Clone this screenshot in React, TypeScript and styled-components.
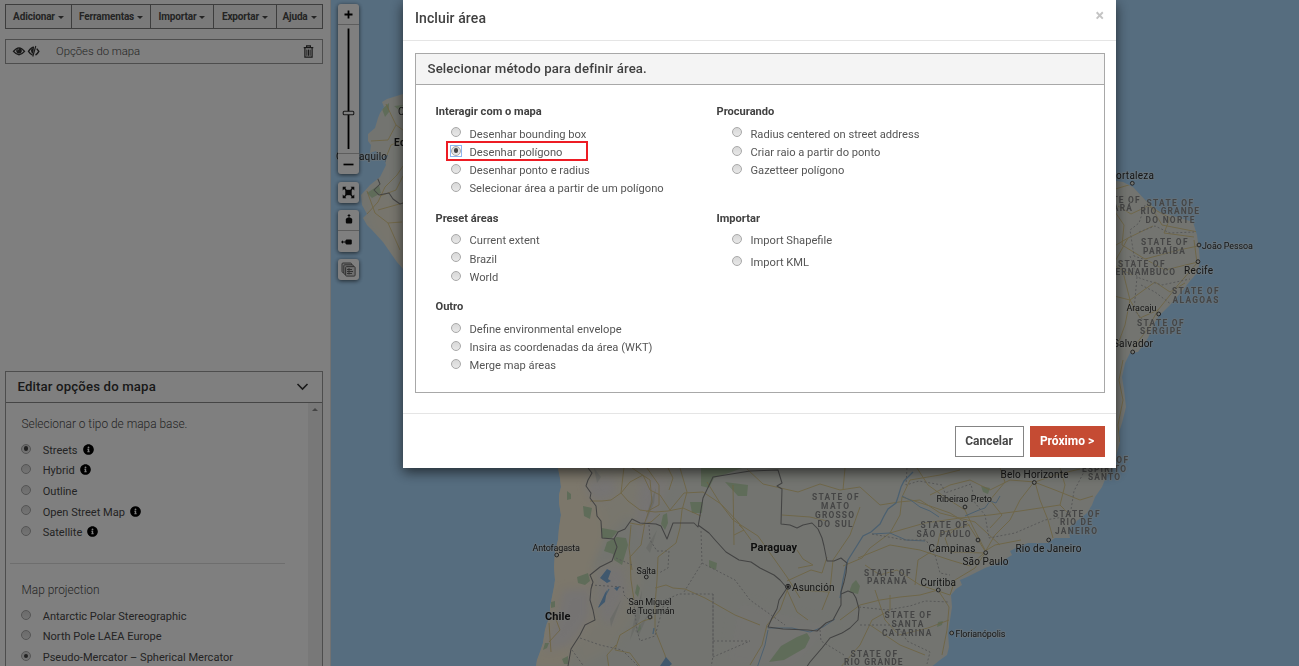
import React from 'react';
import styled, { createGlobalStyle, css } from 'styled-components';
import { FaInfoCircle } from 'react-icons/fa';

const GlobalStyle = createGlobalStyle`
  * { box-sizing: border-box; }
  body { margin: 0; overflow: hidden; background: #fff; font-family: Roboto, "Liberation Sans", sans-serif; color: #484848; }
  button { font-family: inherit; margin: 0; }
`;

const Page = styled.div`
  position: relative;
  display: flex;
  width: 1299px;
  height: 666px;
  overflow: hidden;
  background: #fff;
`;

const Sidebar = styled.aside`
  display: flex;
  flex-direction: column;
  width: 331px;
  flex: none;
  padding: 4px 8px 0 5px;
  border-right: 1px solid #e4e4e4;
  background: #fff;
`;

const Toolbar = styled.div`
  display: flex;
  flex: none;
  height: 25px;
  width: 318px;
  border: 1px solid #7a7a7a;
  background: #f4f4f4;
`;

const ToolButton = styled.button<{ $w: number }>`
  display: flex;
  align-items: center;
  justify-content: center;
  gap: 3px;
  width: ${(p) => p.$w}px;
  padding: 0;
  border: 0;
  border-right: 1px solid #7a7a7a;
  background: transparent;
  color: #484848;
  font-size: 10px;
  font-weight: 700;
  letter-spacing: -0.15px;
  &:last-child { border-right: 0; }
`;

const Caret = styled.span`
  margin-top: 1px;
  border-left: 3px solid transparent;
  border-right: 3px solid transparent;
  border-top: 3px solid #484848;
`;

const LayerRow = styled.div`
  display: flex;
  flex: none;
  align-items: center;
  width: 318px;
  height: 25px;
  margin-top: 10px;
  padding: 0 8px 1px 6px;
  border: 1px solid #9a9a9a;
`;

const LayerName = styled.span`
  flex: 1;
  margin-left: 16px;
  font-size: 11.3px;
  font-weight: 300;
`;

const Options = styled.section`
  display: flex;
  flex: none;
  flex-direction: column;
  width: 318px;
  height: 320px;
  margin-top: 307px;
  border: 1px solid #9a9a9a;
`;

const OptionsHead = styled.header`
  display: flex;
  align-items: center;
  justify-content: space-between;
  height: 31px;
  flex: none;
  padding: 0 13px 1px 11.5px;
  border-bottom: 1px solid #8a8a8a;
  font-size: 13.2px;
  font-weight: 500;
  letter-spacing: 0.15px;
  color: #333;
`;

const OptionsBody = styled.div`
  display: flex;
  flex: 1;
  min-height: 0;
`;

const OptionsScroll = styled.div`
  flex: 1;
  overflow: hidden;
`;

const Scrollbar = styled.div`
  display: flex;
  justify-content: center;
  width: 14px;
  padding-top: 5px;
  background: #f0f0f0;
`;

const ScrollArrow = styled.span`
  width: 0;
  height: 0;
  border-left: 3px solid transparent;
  border-right: 3px solid transparent;
  border-bottom: 3px solid #888;
`;

const SideHeading = styled.h4`
  margin: 0;
  padding: 12px 0 0 15.5px;
  height: 37px;
  font-size: 11.9px;
  line-height: 18px;
  font-weight: 300;
`;

const SideRow = styled.label`
  display: flex;
  align-items: center;
  height: 20.6px;
  padding-left: 15px;
  font-size: 11.05px;
  white-space: nowrap;
  svg { margin-left: 5px; margin-bottom: 2px; color: #000; }
`;

const SideText = styled.span`
  margin-left: 11.7px;
`;

const Separator = styled.hr`
  width: 275px;
  margin: 20px 0 5px 4px;
  border: 0;
  border-top: 1px solid #dcdcdc;
`;

const Radio = styled.span<{ $on?: boolean; $focus?: boolean }>`
  position: relative;
  display: flex;
  align-items: center;
  justify-content: center;
  flex: none;
  width: 10px;
  height: 10px;
  margin-bottom: 3.4px;
  border: 1px solid #a8a8a8;
  border-radius: 50%;
  background: linear-gradient(#d8d8d8, #e8e8e8);
  ${(p) => p.$focus && css`
    &::before {
      content: '';
      position: absolute;
      inset: -2px;
      border: 1px solid #8fb6ee;
    }
  `}
  &::after {
    content: '';
    width: 4.5px;
    height: 4.5px;
    border-radius: 50%;
    background: ${(p) => (p.$on ? '#454545' : 'transparent')};
  }
`;

const MapPane = styled.main`
  position: relative;
  flex: 1;
  background: #acdaff;
`;

const MapDrawing = styled.svg`
  display: block;
  width: 968px;
  height: 666px;
`;

const Controls = styled.div`
  position: absolute;
  left: 7px;
  top: 4px;
  display: flex;
  flex-direction: column;
  gap: 7px;
  width: 21px;
`;

const ControlBox = styled.div`
  display: flex;
  flex-direction: column;
  border-radius: 3px;
  background: #fff;
  box-shadow: 0 1px 4px rgba(0, 0, 0, 0.65);
  &:first-child { margin-bottom: 1px; }
`;

const ControlCell = styled.div<{ $h: number }>`
  display: flex;
  align-items: center;
  justify-content: center;
  height: ${(p) => p.$h}px;
  & + & { border-top: 1px solid #bbb; }
`;

const Backdrop = styled.div`
  position: absolute;
  inset: 0;
  background: rgba(0, 0, 0, 0.5);
`;

const Dialog = styled.div`
  position: absolute;
  left: 403px;
  top: 0;
  display: flex;
  flex-direction: column;
  width: 713px;
  height: 468px;
  background: #fff;
  box-shadow: 0 4px 12px rgba(0, 0, 0, 0.6);
`;

const DialogHead = styled.header`
  display: flex;
  justify-content: space-between;
  height: 41px;
  padding: 9px 12px 0 12px;
  border-bottom: 1px solid #e5e5e5;
`;

const DialogTitle = styled.h3`
  margin: 0;
  font-size: 14px;
  line-height: 18px;
  font-weight: 500;
  letter-spacing: 0.1px;
  color: #404040;
`;

const Close = styled.button`
  height: 14px;
  padding: 0;
  border: 0;
  background: none;
  color: #c4c4c4;
  font-size: 16px;
  line-height: 14px;
  font-weight: 700;
`;

const Panel = styled.section`
  height: 340px;
  margin: 12px 11.5px 0 12px;
  border: 1px solid #a8a8a8;
`;

const PanelHead = styled.header`
  height: 31px;
  padding-left: 11.5px;
  border-bottom: 1px solid #a8a8a8;
  background: #f4f4f4;
  color: #404040;
  font-size: 13.2px;
  font-weight: 500;
  letter-spacing: 0.15px;
  line-height: 30px;
`;

const Choices = styled.div`
  display: grid;
  grid-template-columns: 281px 1fr;
  row-gap: 11px;
  padding: 17px 0 0 19.5px;
`;

const Group = styled.div`
  display: flex;
  flex-direction: column;
`;

const GroupTitle = styled.h4<{ $gap?: number }>`
  height: 20px;
  margin: 0 0 ${(p) => p.$gap ?? 3}px;
  color: #404040;
  font-size: 11.1px;
  font-weight: 700;
  line-height: 20px;
`;

const ChoiceRow = styled.label<{ $h?: number }>`
  position: relative;
  display: flex;
  align-items: center;
  height: ${(p) => p.$h ?? 18.2}px;
  padding-left: 15.5px;
  color: #555;
  font-size: 11.15px;
  white-space: nowrap;
`;

const ChoiceText = styled.span`
  margin-left: 8.5px;
`;

const Highlight = styled.span`
  position: absolute;
  left: 10.5px;
  top: -2px;
  width: 142px;
  height: 20px;
  border: 2px solid #ed1c24;
`;

const DialogFoot = styled.footer`
  display: flex;
  justify-content: flex-end;
  gap: 6px;
  margin-top: 20px;
  padding: 11.5px 11.5px 0 0;
  border-top: 1px solid #e5e5e5;
`;

const FootButton = styled.button<{ $primary?: boolean }>`
  width: ${(p) => (p.$primary ? 75 : 69)}px;
  height: 31px;
  padding: 0 0 1px;
  border: 1px solid ${(p) => (p.$primary ? '#c54b33' : '#848484')};
  background: ${(p) => (p.$primary ? '#c54b33' : '#fff')};
  color: ${(p) => (p.$primary ? '#fff' : '#484848')};
  font-size: 12px;
  font-weight: 700;
`;

type Choice = { label: string; on?: boolean };
const groups: { title: string; gap?: number; rowHeight?: number; items: Choice[] }[] = [
  {
    title: 'Interagir com o mapa',
    items: [
      { label: 'Desenhar bounding box' },
      { label: 'Desenhar polígono', on: true },
      { label: 'Desenhar ponto e radius' },
      { label: 'Selecionar área a partir de um polígono' },
    ],
  },
  {
    title: 'Procurando',
    items: [
      { label: 'Radius centered on street address' },
      { label: 'Criar raio a partir do ponto' },
      { label: 'Gazetteer polígono' },
    ],
  },
  { title: 'Preset áreas', items: [{ label: 'Current extent' }, { label: 'Brazil' }, { label: 'World' }] },
  { title: 'Importar', gap: 1, rowHeight: 22, items: [{ label: 'Import Shapefile' }, { label: 'Import KML' }] },
  {
    title: 'Outro',
    items: [
      { label: 'Define environmental envelope' },
      { label: 'Insira as coordenadas da área (WKT)' },
      { label: 'Merge map áreas' },
    ],
  },
];

const baseMaps = [
  { label: 'Streets', on: true, info: true },
  { label: 'Hybrid', info: true },
  { label: 'Outline' },
  { label: 'Open Street Map', info: true },
  { label: 'Satellite', info: true },
];

const projections = [
  { label: 'Antarctic Polar Stereographic' },
  { label: 'North Pole LAEA Europe' },
  { label: 'Pseudo-Mercator – Spherical Mercator', on: true },
];

const tools: [string, number][] = [
  ['Adicionar', 66],
  ['Ferramentas', 79],
  ['Importar', 63],
  ['Exportar', 63],
  ['Ajuda', 45],
];

/* text, x (start), y (baseline), rendered width, font size */
type Label = [string, number, number, number, number];
const cityLabels: Label[] = [
  ['Guayaquilo', 336, 159.5, 51, 10],
  ['Ca', 398, 114.5, 14, 10],
  ['ortaleza', 1116, 179, 38, 10],
  ['João Pessoa', 1202, 248.5, 51, 9],
  ['Recife', 1184, 274, 29, 10],
  ['Aracaju', 1126.5, 311, 30, 9],
  ['Salvador', 1113, 347, 40, 10],
  ['Antofagasta', 532.5, 550.5, 47.5, 9],
  ['Salta', 636.5, 573.5, 19.5, 9],
  ['San Miguel', 628.5, 605, 43, 9],
  ['de Tucumán', 626.5, 613.7, 48, 9],
  ['Asunción', 792, 590.5, 42.5, 10],
  ['Ribeirao Preto', 936.5, 502, 55.5, 9],
  ['Belo Horizonte', 1000.5, 477.5, 68, 10],
  ['Campinas', 928.5, 552, 47, 10],
  ['São Paulo', 962.5, 565, 46, 10],
  ['Rio de Janeiro', 1015.5, 552, 66, 10],
  ['Curitiba', 920.5, 585.5, 35.5, 10],
  ['Florianópolis', 955.5, 637, 50, 9],
];
const countryLabels: Label[] = [
  ['Ecuador', 394, 145.5, 40, 10],
  ['Chile', 545, 620.3, 25.5, 11],
  ['Paraguay', 750.5, 550.8, 46.5, 11],
];
const stateLabels: Label[] = [
  ['STATE OF', 1094, 202.5, 45.5, 8.4],
  ['CEARÁ', 1100, 211, 32, 8.4],
  ['STATE OF', 1146.5, 205.5, 46.5, 8.4],
  ['RIO GRANDE', 1140.5, 214.2, 58.5, 8.4],
  ['DO NORTE', 1145.5, 222.8, 49, 8.4],
  ['STATE OF', 1141, 245, 46.5, 8.4],
  ['PARAÍBA', 1143, 253.5, 42, 8.4],
  ['STATE OF', 1118, 266.5, 46.5, 8.4],
  ['PERNAMBUCO', 1109, 275.2, 66, 8.4],
  ['STATE OF', 1172, 294, 46.5, 8.4],
  ['ALAGOAS', 1172.5, 302.7, 46, 8.4],
  ['STATE OF', 1137, 325.7, 46.5, 8.4],
  ['SERGIPE', 1140, 334.3, 41, 8.4],
  ['STATE OF', 1081, 463, 47, 8.4],
  ['ESPÍRITO', 1082, 471.7, 44, 8.4],
  ['SANTO', 1088, 480.3, 32, 8.4],
  ['STATE OF', 812, 500.3, 46.5, 8.4],
  ['MATO', 821, 509, 28, 8.4],
  ['GROSSO', 815, 517.7, 39, 8.4],
  ['DO SUL', 817.5, 526.5, 35, 8.4],
  ['STATE OF', 920.5, 528, 46.5, 8.4],
  ['SÃO PAULO', 916.5, 536.7, 54, 8.4],
  ['STATE OF', 1053, 516.5, 46.5, 8.4],
  ['RIO DE', 1060, 525, 32, 8.4],
  ['JANEIRO', 1055, 533.7, 42, 8.4],
  ['STATE OF', 864, 575.5, 46.5, 8.4],
  ['PARANÁ', 867, 584, 40, 8.4],
  ['STATE OF', 884.5, 618.3, 46.5, 8.4],
  ['SANTA', 891.5, 627, 32, 8.4],
  ['CATARINA', 882, 635.7, 49.5, 8.4],
  ['STATE OF', 850.5, 656.5, 46.5, 8.4],
  ['RIO GRANDE', 844, 665, 58.5, 8.4],
];

const cityDots: [number, number][] = [
  [1132.3, 183.3], [1199, 245], [1198, 261.7], [1158.7, 314], [1132.7, 352],
  [556.7, 555], [646.3, 577], [650, 617], [965, 507], [1034.3, 482.5], [978, 540],
  [985.7, 552.7], [1048.7, 540], [938.3, 590], [951.7, 633],
];

function MapLabels({ items, color, weight, halo }: { items: Label[]; color: string; weight: number; halo: string }) {
  return (
    <g fill={color} fontWeight={weight} stroke={halo} strokeWidth="2" strokeLinejoin="round" paintOrder="stroke">
      {items.map(([text, x, y, width, size], i) => (
        <text key={i} x={x} y={y} fontSize={size} textLength={width}>{text}</text>
      ))}
    </g>
  );
}

function SouthAmerica() {
  return (
    <MapDrawing viewBox="331 0 968 666" fontFamily="Roboto, 'Liberation Sans', sans-serif">
      <defs>
        <clipPath id="land">
          <path id="coast" d="M420 85 L403 94 387 99 382 102 384 107 380 113 378 118 375 128 368 134 368 141 371 145 370 153 376 151 380 155 384 158 386 165 380 177 370 185 361 195 362 205 367 214 363 218 367 225 372 230 383 242 390 252 397 262 404 270 430 310 558 440 558 468 560 478 561 487 559 495 559 503 561 515 559 528 558 540 555 552 554 567 555 580 554 587 552 597 550 607 550 617 547 623 545 630 543 643 540 652 537 660 536 666 930 668 940 660 947 655 949 647 948 633 950 620 952 607 951 595 956 589 962 585 960 580 967 577 977 572 985 568 993 565 1004 560 1012 555 1010 551 1018 547 1028 543 1048 543 1055 538 1070 538 1068 528 1078 520 1087 513 1092 505 1095 497 1102 487 1106 477 1110 470 1116 456 1120 442 1119 432 1122 423 1126 407 1124 390 1122 377 1125 363 1130 353 1138 352 1148 338 1153 326 1158 317 1170 305 1183 290 1190 281 1197 273 1200 262 1199 250 1197 235 1193 222 1177 217 1160 212 1147 202 1133 187 1123 182 1110 180 1000 100 600 60 Z" />
        </clipPath>
        <filter id="soft" x="-20%" y="-20%" width="140%" height="140%"><feGaussianBlur stdDeviation="4" /></filter>
      </defs>
      <use href="#coast" fill="#e6e9e0" />
      <g clipPath="url(#land)">
        {/* arid highlands */}
        <g filter="url(#soft)" fill="#f8eed6">
          <path d="M550 460 L588 468 599 510 606 535 592 568 591 600 595 620 578 640 566 668 530 668 545 620Z" />
          <path d="M585 468 L680 460 655 505 640 522 625 518 612 536 598 518Z" opacity=".6" />
          <path d="M592 570 L630 550 642 580 632 620 611 650 575 668 580 637Z" opacity=".5" />
          <path d="M375 185 L410 210 410 285 368 222Z" opacity=".5" />
        </g>
        <g filter="url(#soft)" fill="#ebe7e5">
          <path d="M586 482 L612 477 617 493 600 502 588 495Z" />
          <path d="M563 590 L590 588 590 618 570 645 545 652 556 620Z" />
          <path d="M599 570 L621 565 626 590 610 626 600 616Z" />
          <path d="M640 480 L668 478 655 520 640 545 637 515Z" />
          <path d="M738 600 L835 625 795 668 725 664Z" opacity=".4" />
        </g>
        <g fill="#ced2cb" opacity=".7">
          <path d="M651 500 L656 488 654 503 646 522 648 510Z M642 590 L640 618 630 640 634 620Z M657 530 L650 553 646 548Z M621 600 L611 627 610 619Z M594 468 L601 477 597 483Z M648 615 L639 635 635 631Z" />
        </g>
        {/* parks */}
        <g fill="#bfd8b2">
          <path d="M701 468 L745 467 726 474 714 478 709 488 701 486Z" />
          <path d="M690 502 L703 502 702 513 692 513Z M602 528 L618 531 611 539 602 538Z M617 537 L626 538 628 545 622 565 614 560 613 554 604 551 607 542Z" />
          <path d="M663 515 L667 513 668 523 665 530 661 524Z M567 491 L571 494 571 499 567 500Z M583 506 L592 508 590 519 584 516Z M577 577 L588 573 590 581 585 585 578 583Z" />
          <path d="M725 482 L748 485 747 496 738 496Z M709 560 L717 563 716 570 709 567Z" />
          <path d="M856 580 L860 586 858 594 849 592 852 584Z M807 633 L810 638 805 648 784 660 769 662 781 646 797 637Z M981 486 L990 488 988 494 983 492Z M938 622 L943 621 942 625 937 627Z M637 584 L640 588 638 597 635 593Z M640 623 L641 629 637 633Z M545 643 L549 643 547 648 543 650Z M562 659 L568 656 568 664 564 664Z M551 602 L555 601 555 607 551 608Z" />
          <path d="M382 109 L389 103 389 112 385 117Z M367 193 L379 185 381 193 372 198Z M394 106 L403 105 400 111Z" />
        </g>
        {/* roads */}
        <g fill="none" stroke="#dcc680" strokeWidth="1" strokeLinejoin="round" opacity=".8">
          <path d="M590 501 L602 501 611 500 621 493 630 482 643 475 650 490 660 495 670 510 684 493 703 492 721 504 738 522 751 540" />
          <path d="M624 467 L621 493 628 501 640 510 655 512 668 511 683 508 701 516 M632 468 L650 480 652 502 645 522 641 545 630 557 631 580 634 600" />
          <path d="M647 468 L659 485 659 505 646 512 M680 468 L687 492 682 510 680 528 676 543 658 557 657 580 655 605 655 630 665 655 668 668" />
          <path d="M668 468 L673 478 669 490 M631 525 L629 548 632 570 M630 523 L641 525 651 522 660 514" />
          <path d="M655 588 L666 585 673 588 685 589 705 598 735 615 760 625 M653 618 L643 621 630 629 620 635 615 650 630 653 641 668 M616 645 L607 655 609 668" />
          <path d="M707 482 L720 503 733 520 758 536 787 577 800 598 M733 485 L734 545 M734 535 L744 530 739 525" />
          <path d="M747 469 L763 484 798 492 820 484 840 490 860 487 880 505 899 502 920 500 940 513 975 522 1000 545" />
          <path d="M845 468 L843 490 M782 515 L810 517 827 521 M860 507 L850 535 833 560 830 590 822 610" />
          <path d="M787 581 L800 575 811 570 822 573 827 557 M798 568 L813 565 803 559 797 550 M787 590 L797 612 808 620 M795 590 L830 592 M788 588 L780 610 767 625 762 645 750 665" />
          <path d="M843 566 L862 558 870 548 890 533 900 515 902 497 930 506 950 513 968 524 985 551 995 545 1021 540" />
          <path d="M865 565 L880 575 897 570 920 585 935 590 950 595 955 580 975 568 985 553 M858 558 L890 545 920 550 950 560 970 566 985 552" />
          <path d="M840 620 L860 605 880 600 900 597 920 595 938 590 949 607 947 630 942 655 M840 668 L860 645 872 620 890 610 890 595" />
          <path d="M870 625 L900 645 925 655 M875 590 L885 620 899 635 928 628 949 620" />
          <path d="M917 468 L928 485 946 498 965 510 973 527 985 550 M902 497 L910 480 940 475 960 470" />
          <path d="M930 495 L950 485 970 480 990 490 1010 480 1035 482 1055 475 1080 469" />
          <path d="M1035 482 L1040 500 1048 520 1053 538 M1034 482 L1020 500 1010 520 995 535 985 552 M1034 482 L1055 490 1080 500 1093 496" />
          <path d="M1060 468 L1065 485 1060 505 1070 515 M1000 468 L1005 482 990 500 1002 515 990 528 M960 525 L945 538 950 552 985 553" />
          <path d="M890 533 L925 523 960 518 990 515 1020 511 1060 505 M915 585 L918 560 937 548 940 533 970 525" />
          <path d="M555 617 L560 630 549 642 M549 623 L551 652" />
          <path d="M386 104 L396 125 403 130 M371 141 L388 140 396 125 M367 214 L378 202 385 187 397 175 403 166 M367 191 L375 213 388 223 400 250 M378 210 L403 203 M388 223 L402 222 M380 196 L396 190 403 176 M385 160 L391 145 403 140" />
          <path d="M1112 190 L1132 184 1150 205 1162 225 1198 232 M1111 206 L1124 225 1122 245 1145 259 1179 250 1198 246 M1118 206 L1131 214 1148 206 1170 218 1164 233 1194 237" />
          <path d="M1111 248 L1128 238 1153 226 M1110 295 L1130 300 1155 282 1170 292 1185 283 M1120 260 L1130 300 1125 325 1118 344 M1194 240 L1197 263 1178 285 1158 310 1147 330 1133 348" />
          <path d="M1145 259 L1165 270 1198 262 M1128 238 L1113 265 1132 275 M1130 300 L1140 318 1158 310 M1123 360 L1119 380 1123 400 1118 425 1120 442" />
        </g>
        {/* rivers and lakes */}
        <g fill="none" stroke="#98c0e0" strokeWidth="1.3">
          <path d="M913 472 L904 481 901 487 898 497 896 503 888 509 884 516 880 524 871 532 863 536 858 544 853 552 848 560 846 566 843 580 840 598" />
          <path d="M872 534 L890 533 906 540 925 541 M902 496 L912 501 920 507 930 511 939 517 M1000 496 L996 503 990 501 985 508 979 510 965 516" strokeWidth="1" />
          <path d="M768 628 L792 628 810 632 823 627 835 619 M768 630 L765 645 757 668" strokeWidth="1" />
          <path d="M609 589 L599 607 M654 628 L653 634" strokeWidth="1.4" />
        </g>
        <g fill="#80b0dc">
          <path d="M607 569 L611 571 608 579 611 581 607 583 600 578Z M614 588 L620 586 617 591Z M666 657 L672 664 667 668 660 666Z M605 593 L607 590 605 602 598 608Z" />
          <path d="M384 156 L388 155 385 163Z M381 165 L385 163 382 170Z" />
        </g>
        {/* state borders */}
        <g fill="none" stroke="#b0b0b0" strokeWidth="1" strokeDasharray="2 2">
          <path d="M649 525 L650 540 657 551 669 551 668 568 659 573 M591 585 L623 587 624 595 634 605 637 630 640 641 655 636 665 600 679 594 713 594 713 657 750 641 M701 531 L702 563 684 592 M702 563 L735 580 750 600 785 625 M713 641 L750 641 M580 638 L600 645 622 650 640 668 M713 594 L713 656 711 668 M572 650 L585 668 M616 558 L632 565" />
          <path d="M907 468 L906 485 919 481 942 485 945 493 971 484 975 503 985 515 989 538 1015 533 1045 520 1070 516 1074 491 1086 468" />
          <path d="M872 534 L905 540 926 540 935 555 940 573 950 575 M859 607 L887 610 910 606 925 601 949 602 M860 625 L897 625 907 641 930 652 927 664 M820 630 L821 641 844 655" />
          <path d="M1145 205 L1139 223 1130 230 1134 256 1143 259 M1139 232 L1155 226 1170 233 1194 232 M1130 256 L1137 277 1145 280 1162 285 1190 279 M1141 285 L1155 292 1172 305 M1137 277 L1134 310 1143 320" />
        </g>
        {/* country borders */}
        <g fill="none" stroke="#868686" strokeWidth="1.05" strokeLinejoin="round">
          <path d="M588 468 L592 473 588 480 586 486 591 493 590 498 596 506 597 516 601 521 602 538 614 539 617 547 612 561 600 567 590 575 593 582 591 589 590 600 593 610 595 620 585 625 580 635 571 649 568 666" />
          <path d="M614 539 L618 532 625 529 632 519 640 523 656 524 661 526 667 539 673 523 694 523 698 527 703 498 713 477 750 471 778 470 782 483 777 486 782 489 781 524 790 525 797 528 803 525 812 523 818 529 822 538 824 546 827 561 834 561 841 558 847 563 846 573 844 582 841 592 841 605 833 620 826 623 817 631 808 630 783 629 768 627 772 618 777 609 779 600 787 588 780 580 774 575 760 568 751 562 739 560 726 552 716 541 709 533 698 525" />
          <path d="M841 594 L848 591 853 593 856 598 859 609 858 620 850 628 842 633 830 638 822 648 810 662 806 668" />
          <path d="M377 177 L380 184 374 190 379 195 389 193 393 199 400 204 403 203" />
        </g>
      </g>
      <MapLabels items={stateLabels} color="#8a8a8a" weight={700} halo="#e8ebe255" />
      <MapLabels items={cityLabels} color="#2c2c2c" weight={400} halo="#eef0ea66" />
      <MapLabels items={countryLabels} color="#1c1c1c" weight={700} halo="#eef0ea66" />
      <g fill="#e8ebe2" stroke="#444" strokeWidth="1">
        {cityDots.map(([x, y]) => <circle key={`${x}-${y}`} cx={x} cy={y} r="1.9" />)}
        <circle cx="788" cy="586.7" r="2.4" />
        <circle cx="788" cy="586.7" r="1" fill="#222" />
      </g>
    </MapDrawing>
  );
}

function EyeIcons() {
  return (
    <svg width="28" height="12" viewBox="12 45 28 12">
      <g fill="none" stroke="#333" strokeWidth="1.4">
        <path d="M13.5 51.4 Q19 44.3 24.5 51.4 Q19 58 13.5 51.4Z" />
        <path d="M34 47.3 Q31 47.4 28.5 51.4 Q30.5 54.5 32.6 55.1" />
        <path d="M36.7 48.6 L38.8 51.4 Q37.5 54 35.5 55" />
        <path d="M35.8 46 L32.8 56.5" strokeWidth="1.1" />
      </g>
      <circle cx="19" cy="50.8" r="2.8" fill="#333" />
      <path d="M34 48 Q30.8 48 31 51 Q31.3 53.2 33 54Z" fill="#333" />
      <path d="M17.4 50.4 Q17.6 49 19 49" stroke="#ddd" strokeWidth=".7" fill="none" />
    </svg>
  );
}

function TrashIcon() {
  return (
    <svg width="11" height="13" viewBox="0 0 11 13" fill="none" stroke="#333" strokeWidth="1.2">
      <path d="M.7 2.6H10.3M3.6 2.3V.8H7.4V2.3M1.9 3V12.2H9.1V3" />
      <path d="M3.9 4.5V10.8M5.5 4.5V10.8M7.1 4.5V10.8" strokeWidth="1" />
    </svg>
  );
}

function MapControls() {
  return (
    <Controls>
      <ControlBox>
        <ControlCell $h={20}>
          <svg width="9" height="9" viewBox="0 0 9 9" stroke="#000" strokeWidth="1.8"><path d="M.5 4.5H8.5M4.5 .5V8.5" /></svg>
        </ControlCell>
        <ControlCell $h={129}>
          <svg width="13" height="122" viewBox="0 0 13 122">
            <path d="M6.5 .5V121" stroke="#000" strokeWidth="1.8" />
            <rect x="1.2" y="83.3" width="10.6" height="3.4" rx="1" fill="#fff" stroke="#333" strokeWidth="1.1" />
          </svg>
        </ControlCell>
        <ControlCell $h={21}>
          <svg width="11" height="3" viewBox="0 0 11 3"><path d="M.5 1.5H10.5" stroke="#000" strokeWidth="1.7" /></svg>
        </ControlCell>
      </ControlBox>
      <ControlBox>
        <ControlCell $h={21}>
          <svg width="13" height="13" viewBox="0 0 13 13" fill="#111">
            <rect x="3.3" y="3.8" width="6.4" height="5.4" />
            <path d="M.7 .7H4.4L3.2 2 4.6 3.5 3.5 4.5 2.1 3 .7 4.4ZM12.3 .7V4.4L10.9 3 9.5 4.5 8.4 3.5 9.8 2 8.6 .7ZM.7 12.3V8.6L2.1 10 3.5 8.5 4.6 9.5 3.2 11 4.4 12.3ZM12.3 12.3H8.6L9.8 11 8.4 9.5 9.5 8.5 10.9 10 12.3 8.6Z" />
          </svg>
        </ControlCell>
      </ControlBox>
      <ControlBox>
        <ControlCell $h={20}>
          <svg width="10" height="12" viewBox="0 0 10 12" fill="#111"><path d="M5 0L6.8 2H5.5V3.8H6.8L8.2 5V8.2Q8.2 9.4 7 9.4H3Q1.8 9.4 1.8 8.2V5L3.2 3.8H4.5V2H3.2Z" /></svg>
        </ControlCell>
        <ControlCell $h={22}>
          <svg width="15" height="8" viewBox="0 0 15 8" fill="#111"><path d="M0 4L2 2.2V3.5H4.4V2.4L5.4 1.5H9.8Q10.8 1.5 10.8 2.5V5.5Q10.8 6.5 9.8 6.5H5.4L4.4 5.6V4.5H2V5.8Z" /></svg>
        </ControlCell>
      </ControlBox>
      <ControlBox>
        <ControlCell $h={21}>
          <svg width="15" height="15" viewBox="0 0 15 15" fill="#ddd" stroke="#666" strokeWidth="1">
            <rect x="1" y="1" width="9.5" height="9.5" rx="1" />
            <rect x="2.8" y="2.8" width="9.5" height="9.5" rx="1" />
            <rect x="4.6" y="4.6" width="9.5" height="9.5" rx="1" />
            <path d="M6 7.5H11M6 9.5H12M6 11.5H11M8 6V12.5" />
          </svg>
        </ControlCell>
      </ControlBox>
    </Controls>
  );
}

export default function App() {
  return (
    <Page>
      <GlobalStyle />
      <Sidebar>
        <Toolbar>
          {tools.map(([label, width]) => (
            <ToolButton key={label} $w={width}>{label}<Caret /></ToolButton>
          ))}
        </Toolbar>
        <LayerRow>
          <EyeIcons />
          <LayerName>Opções do mapa</LayerName>
          <TrashIcon />
        </LayerRow>
        <Options>
          <OptionsHead>
            Editar opções do mapa
            <svg width="13" height="9" viewBox="0 0 13 9" fill="none" stroke="#333" strokeWidth="1.6"><path d="M1.5 2L6.5 7L11.5 2" /></svg>
          </OptionsHead>
          <OptionsBody>
            <OptionsScroll>
              <SideHeading>Selecionar o tipo de mapa base.</SideHeading>
              {baseMaps.map((m) => (
                <SideRow key={m.label}>
                  <Radio $on={m.on} />
                  <SideText>{m.label}</SideText>
                  {m.info && <FaInfoCircle size={11} />}
                </SideRow>
              ))}
              <Separator />
              <SideHeading>Map projection</SideHeading>
              {projections.map((m) => (
                <SideRow key={m.label}>
                  <Radio $on={m.on} />
                  <SideText>{m.label}</SideText>
                </SideRow>
              ))}
            </OptionsScroll>
            <Scrollbar><ScrollArrow /></Scrollbar>
          </OptionsBody>
        </Options>
      </Sidebar>
      <MapPane>
        <SouthAmerica />
        <MapControls />
      </MapPane>
      <Backdrop />
      <Dialog>
        <DialogHead>
          <DialogTitle>Incluir área</DialogTitle>
          <Close>×</Close>
        </DialogHead>
        <Panel>
          <PanelHead>Selecionar método para definir área.</PanelHead>
          <Choices>
            {groups.map((g) => (
              <Group key={g.title}>
                <GroupTitle $gap={g.gap}>{g.title}</GroupTitle>
                {g.items.map((c) => (
                  <ChoiceRow key={c.label} $h={g.rowHeight}>
                    <Radio $on={c.on} $focus={c.on} />
                    <ChoiceText>{c.label}</ChoiceText>
                    {c.on && <Highlight />}
                  </ChoiceRow>
                ))}
              </Group>
            ))}
          </Choices>
        </Panel>
        <DialogFoot>
          <FootButton>Cancelar</FootButton>
          <FootButton $primary>Próximo &gt;</FootButton>
        </DialogFoot>
      </Dialog>
    </Page>
  );
}
